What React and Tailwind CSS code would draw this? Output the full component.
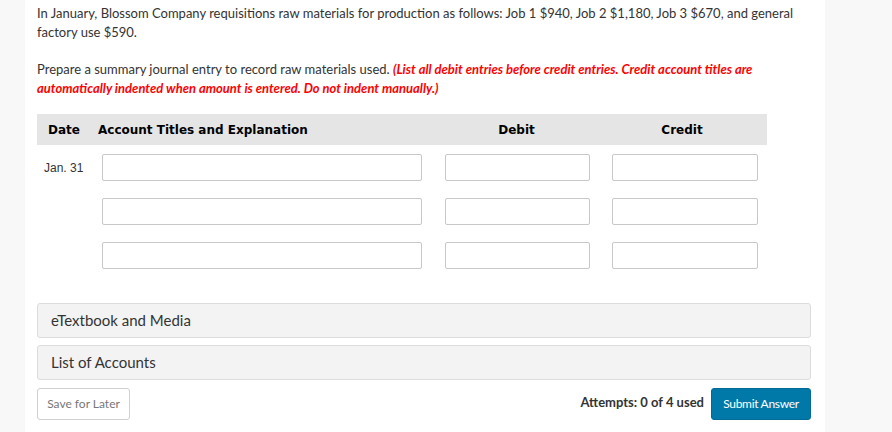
import React from "react";

const lato = { fontFamily: "Lato, 'Open Sans', sans-serif" };

function Row({ date }) {
  return (
    <div className="flex items-center h-[27px] mb-[17px]">
      <div className="w-[65px] pl-[7px] text-[12px] text-[#333]" style={{ fontFamily: "'Liberation Sans', Arial, sans-serif" }}>
        {date}
      </div>
      <div className="w-[320px] h-[27px] border border-[#c8c8c8] rounded-[2px] bg-white" />
      <div className="w-[23px]" />
      <div className="w-[145px] h-[27px] border border-[#c8c8c8] rounded-[2px] bg-white" />
      <div className="w-[22px]" />
      <div className="w-[146px] h-[27px] border border-[#c8c8c8] rounded-[2px] bg-white" />
    </div>
  );
}

export default function App() {
  return (
    <div className="w-[892px] h-[432px] bg-[#f8f8f8] flex overflow-hidden">
      <div className="w-[25px]" />
      <div className="w-[800px] h-full bg-white pl-[12px] pr-[14px] pt-[4px]" style={lato}>
        <p className="text-[13px] leading-[19px] text-[#333] pr-[10px]">
          In January, Blossom Company requisitions raw materials for production as follows: Job 1 $940, Job 2 $1,180, Job 3 $670, and general factory use $590.
        </p>
        <p className="mt-[18px] text-[13px] leading-[19px] text-[#333] pr-[20px]">
          Prepare a summary journal entry to record raw materials used.{" "}
          <span className="text-[#ff0000] font-bold italic">
            (List all debit entries before credit entries. Credit account titles are automatically indented when amount is entered. Do not indent manually.)
          </span>
        </p>
        <div className="mt-[16px] w-[730px] h-[31px] bg-[#e5e5e5] flex items-center text-[12px] font-bold text-black" style={{ fontFamily: "'DejaVu Sans', Verdana, sans-serif" }}>
          <div className="w-[61px] pl-[11px]">Date</div>
          <div className="w-[346px]">Account Titles and Explanation</div>
          <div className="w-[145px] text-center">Debit</div>
          <div className="w-[20px]" />
          <div className="w-[146px] text-center">Credit</div>
        </div>
        <div className="mt-[9px]">
          <Row date="Jan. 31" />
          <Row date="" />
          <Row date="" />
        </div>
        <div className="mt-[34px] h-[35px] border border-[#dcdcdc] bg-[#f3f3f3] rounded-[3px] flex items-center pl-[13px] text-[15px] text-[#333]">
          eTextbook and Media
        </div>
        <div className="mt-[7px] h-[35px] border border-[#dcdcdc] bg-[#f3f3f3] rounded-[3px] flex items-center pl-[13px] text-[15px] text-[#333]">
          List of Accounts
        </div>
        <div className="mt-[8px] flex items-center">
          <div className="w-[93px] h-[32px] border border-[#d0d0d0] rounded-[3px] bg-white flex items-center justify-center text-[12px] text-[#777]">
            Save for Later
          </div>
          <div className="flex-1" />
          <div className="text-[13px] font-bold text-[#333] mr-[7px] -mt-[3px]">Attempts: 0 of 4 used</div>
          <div className="w-[100px] h-[32px] rounded-[3px] bg-[#0079a9] border border-[#006a94] flex items-center justify-center text-[12px] text-white tracking-[-0.3px]">
            Submit Answer
          </div>
        </div>
      </div>
    </div>
  );
}
